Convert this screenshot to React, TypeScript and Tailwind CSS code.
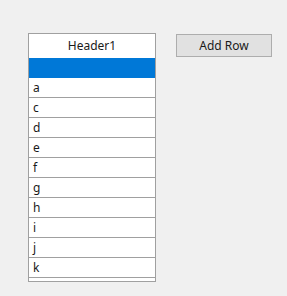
const rows = ['a', 'c', 'd', 'e', 'f', 'g', 'h', 'i', 'j', 'k'];

export default function App() {
  return (
    <div
      className="w-[287px] h-[296px] bg-[#f0f0f0] pl-[28px] pt-[33px] flex items-start gap-[20px] text-[12px] text-[#1a1a1a]"
      style={{ fontFamily: '"Noto Sans", "Open Sans", sans-serif' }}
    >
      <div className="w-[128px] h-[249px] border border-[#a0a0a0] bg-white flex flex-col overflow-hidden">
        <div className="h-[24px] shrink-0 flex items-center justify-center bg-white">Header1</div>
        <div className="h-[20px] shrink-0 bg-[#0078d7] border-b border-[#0078d7]" />
        {rows.map(r => (
          <div
            key={r}
            className="h-[20px] shrink-0 border-b border-[#a0a0a0] flex items-center pl-[4px] pt-[1px] leading-none"
          >
            {r}
          </div>
        ))}
      </div>
      <button className="mt-[1px] w-[96px] h-[23px] bg-[#e1e1e1] border border-[#adadad] flex items-center justify-center leading-none">
        Add Row
      </button>
    </div>
  );
}
